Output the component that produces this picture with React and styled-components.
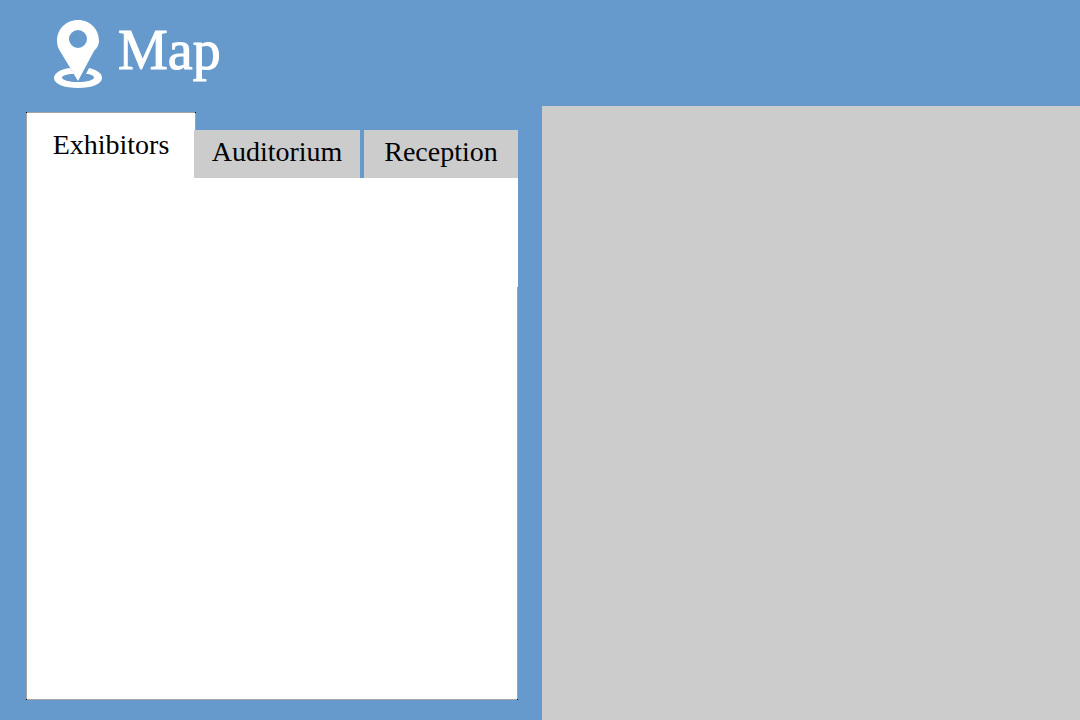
import React, { useState } from "react";
import styled, { createGlobalStyle, css } from "styled-components";

const GlobalStyle = createGlobalStyle`
  *, *::before, *::after { box-sizing: border-box; }
  body {
    margin: 0;
    background: #6699cc;
    color: #000;
    font-family: "Liberation Serif", "Times New Roman", serif;
  }
`;

const Page = styled.div`
  display: flex;
  flex-direction: column;
  min-height: 100vh;
`;

const Header = styled.header`
  display: flex;
  align-items: flex-start;
  gap: 16px;
  height: 106px;
  padding: 20px 54px 0;
  color: #fff;
`;

const PinIcon = styled.svg`
  width: 48px;
  height: 68px;
  flex: none;
`;

const Title = styled.h1`
  margin: 0;
  font-size: 56px;
  line-height: 60px;
  font-weight: 400;
  -webkit-text-stroke: 1px currentColor;
`;

const Main = styled.main`
  flex: 1;
  display: grid;
  grid-template-columns: 542fr 538fr;
`;

const Sidebar = styled.section`
  display: flex;
  flex-direction: column;
  padding: 6px 24px 20px 26px;
`;

const TabList = styled.div`
  display: grid;
  grid-template-columns: 168fr 166fr 158fr;
  align-items: end;
`;

/* Grey hairlines with a black pixel where two of them meet. */
const line = "linear-gradient(#a3a3a3, #a3a3a3)";
const dot = "linear-gradient(#000, #000)";

const activeTab = css`
  height: 66px;
  margin-right: -2px;
  padding: 0;
  background:
    ${dot} left top / 1px 1px no-repeat,
    ${dot} right top / 1px 1px no-repeat,
    ${line} left top / 100% 1px no-repeat,
    ${line} left top / 1px 100% no-repeat,
    ${line} right top / 1px 100% no-repeat,
    #fff;
`;

const Tab = styled.button`
  height: 48px;
  margin: 0 0 0 ${(p) => (p.$spaced ? "4px" : "0")};
  padding: 0 0 4px;
  border: 0;
  background: #cccccc;
  color: #000;
  font-family: inherit;
  font-size: 28px;
  line-height: 32px;
  white-space: nowrap;
  cursor: pointer;
  ${(p) => p.$active && activeTab}
`;

const Panel = styled.div`
  flex: 1;
  background:
    ${dot} left bottom / 1px 1px no-repeat,
    ${dot} right bottom / 1px 1px no-repeat,
    ${line} left bottom / 100% 1px no-repeat,
    ${line} left top / 1px 100% no-repeat,
    ${line} right 109px / 1px 100% no-repeat,
    #fff;
`;

const MapArea = styled.section`
  background: #cccccc;
`;

const TABS = [
  { name: "Exhibitors" },
  { name: "Auditorium" },
  { name: "Reception", spaced: true },
];

export default function App() {
  const [active, setActive] = useState("Exhibitors");

  return (
    <Page>
      <GlobalStyle />
      <Header>
        <PinIcon viewBox="0 0 48 68" aria-hidden="true">
          <path
            fill="currentColor"
            fillRule="evenodd"
            d="M24 0C12 0 3 9 3 21C3 25 4 28 6 31L24 61L40 31C43 28 45 25 45 21C45 9 36 0 24 0ZM24 10A9 9 0 1 1 24 28A9 9 0 1 1 24 10Z"
          />
          <path
            fill="currentColor"
            d="M16 48C7 49 0 53 0 58C0 64 10 68 24 68S48 64 48 58C48 53 43 50 35 48L32 54C37 54 40 56 40 57.5C40 60 33 62 24 62S8 60 8 57.5C8 56 12 54 20 54Z"
          />
        </PinIcon>
        <Title>Map</Title>
      </Header>
      <Main>
        <Sidebar>
          <TabList role="tablist" aria-label="Locations">
            {TABS.map((tab) => (
              <Tab
                key={tab.name}
                id={`tab-${tab.name}`}
                type="button"
                role="tab"
                aria-selected={active === tab.name}
                aria-controls="location-panel"
                $active={active === tab.name}
                $spaced={tab.spaced}
                onClick={() => setActive(tab.name)}
              >
                {tab.name}
              </Tab>
            ))}
          </TabList>
          <Panel id="location-panel" role="tabpanel" aria-labelledby={`tab-${active}`} />
        </Sidebar>
        <MapArea aria-label="Map" />
      </Main>
    </Page>
  );
}
